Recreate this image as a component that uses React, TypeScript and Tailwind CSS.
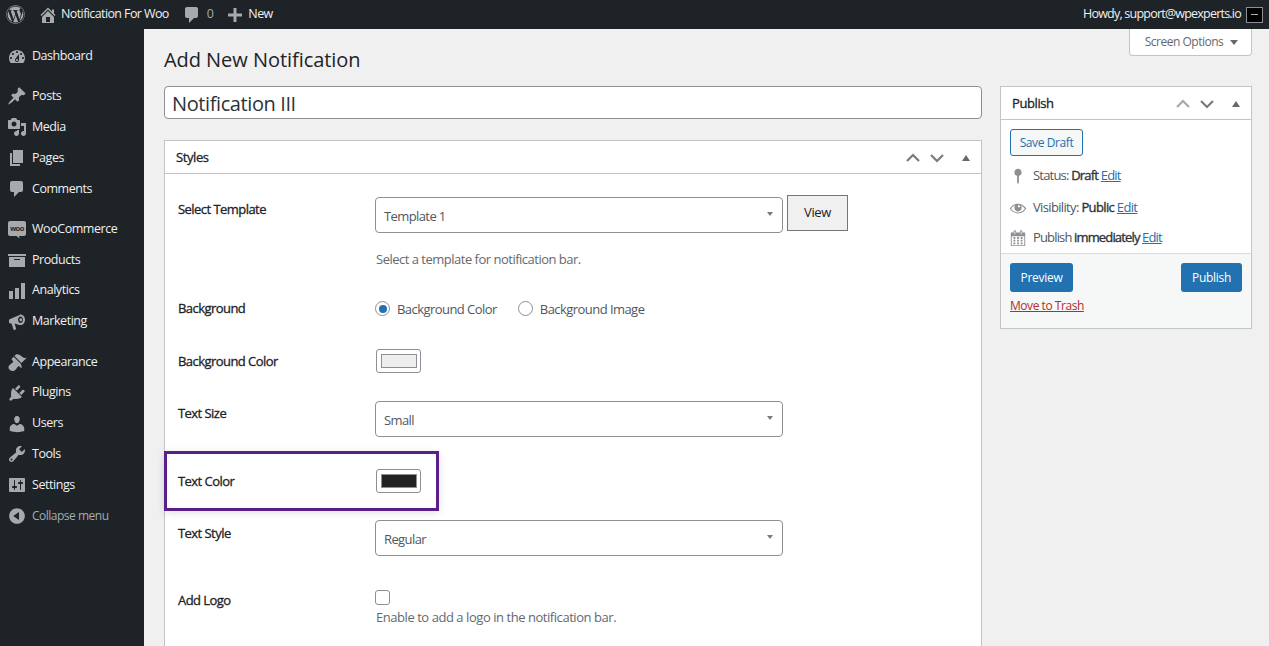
import React from 'react'
import { FaWordpress } from 'react-icons/fa'

const paths = {
  home: 'M16 8.5l1.53 1.53-1.06 1.06L10 4.62l-6.47 6.47-1.06-1.06L10 2.5l4 4v-2h2v4zm-6-2.46l6 5.99V18H4v-5.97zM12 17v-5H8v5h4z',
  comment: 'M5 2h9c1.1 0 2 .9 2 2v7c0 1.1-.9 2-2 2h-2l-5 5v-5H5c-1.1 0-2-.9-2-2V4c0-1.1.9-2 2-2z',
  plus: 'M17 8.5v3h-5.5V17h-3v-5.5H3v-3h5.5V3h3v5.5H17z',
  dashboard: 'M3.76 16h12.48c1.1-1.37 1.76-3.11 1.76-5 0-4.42-3.58-8-8-8s-8 3.58-8 8c0 1.89.66 3.63 1.76 5zM10 4c.55 0 1 .45 1 1s-.45 1-1 1-1-.45-1-1 .45-1 1-1zM6 6c.55 0 1 .45 1 1s-.45 1-1 1-1-.45-1-1 .45-1 1-1zm8 0c.55 0 1 .45 1 1s-.45 1-1 1-1-.45-1-1 .45-1 1-1zm-5.37 5.55L12 7v6c0 1.1-.9 2-2 2s-2-.9-2-2c0-.57.24-1.08.63-1.45zM4 10c.55 0 1 .45 1 1s-.45 1-1 1-1-.45-1-1 .45-1 1-1zm12 0c.55 0 1 .45 1 1s-.45 1-1 1-1-.45-1-1 .45-1 1-1zm-5 3c0-.55-.45-1-1-1s-1 .45-1 1 .45 1 1 1 1-.45 1-1z',
  pin: 'M10.44 3.02l1.82-1.82 6.36 6.35-1.83 1.82c-1.05-.68-2.48-.57-3.41.36l-.75.75c-.92.93-1.04 2.35-.35 3.41l-1.83 1.82-2.41-2.41-2.8 2.79c-.42.42-3.38 2.71-3.8 2.29s1.86-3.39 2.28-3.81l2.79-2.79L4.1 9.36l1.83-1.82c1.05.69 2.48.57 3.4-.36l.75-.75c.93-.92 1.05-2.35.36-3.41z',
  media: 'M13 11V4c0-.55-.45-1-1-1h-1.67L9 1H5L3.67 3H2c-.55 0-1 .45-1 1v7c0 .55.45 1 1 1h10c.55 0 1-.45 1-1zM7 4.5c1.38 0 2.5 1.12 2.5 2.5S8.38 9.5 7 9.5 4.5 8.38 4.5 7 5.62 4.5 7 4.5zM14 6h5v10.5c0 1.38-1.12 2.5-2.5 2.5S14 17.88 14 16.5s1.12-2.5 2.5-2.5c.17 0 .34.02.5.05V9h-3V6zm-4 8.05V13h2v3.5c0 1.38-1.12 2.5-2.5 2.5S7 17.88 7 16.5 8.12 14 9.5 14c.17 0 .34.02.5.05z',
  pages: 'M6 15V2h10v13H6zm-1 1h8v2H3V5h2v11z',
  products: 'M19 4v2H1V4h18zM2 7h16v10H2V7zm11 3V9H7v1h6z',
  analytics: 'M18 18V2h-4v16h4zm-6 0V7H8v11h4zm-6 0v-8H2v8h4z',
  marketing: 'M13.5 2.5c2.5 0 4.5 2.4 4.5 5.3s-2 5.3-4.5 5.3c-.4 0-.8-.1-1.2-.2L7.6 11.6l1.5 5.2c.1.4-.1.7-.5.8l-1.4.4c-.4.1-.7-.1-.8-.4l-1.7-5.9-2-.4c-.4-.1-.7-.4-.7-.8V8.2c0-.4.3-.7.6-.9l9.9-4.4c.4-.2.7-.4 1-.4zm0 2c-1.4 0-2.5 1.5-2.5 3.3s1.1 3.3 2.5 3.3S16 9.6 16 7.8s-1.100-3.300-2.500-3.300zm.3 1.800c.8 0 1.400.7 1.400 1.500s-.6 1.500-1.400 1.500-1.400-.7-1.400-1.500.6-1.500 1.400-1.500z',
  appearance: 'M14.48 11.06L7.41 3.99l1.5-1.5c.5-.56 2.3-.47 3.51.32 1.21.8 1.43 1.28 2.91 2.1 1.18.64 2.45 1.26 4.45.85zm-.71.71L6.7 4.7 4.93 6.47c-.39.39-.39 1.02 0 1.41l1.06 1.06c.39.39.39 1.03 0 1.42-.6.6-1.43 1.11-2.21 1.69-.35.26-.7.53-1.01.84C1.43 13.23.91 15.95 2.7 17.74c1.79 1.79 4.48 1.27 5.84-.08.31-.31.58-.66.85-1.01.58-.78 1.09-1.61 1.69-2.21.39-.39 1.02-.39 1.41 0l1.06 1.06c.39.39 1.02.39 1.41 0z',
  plugins: 'M13.11 4.36L9.87 7.6 8 5.73l3.24-3.24c.35-.34 1.05-.2 1.56.32.52.51.66 1.21.31 1.55zm-8 1.77l.91-1.12 9.01 9.01-1.19.84c-.71.71-2.63 1.16-3.82 1.16H6.14L4.9 17.26c-.59.59-1.54.59-2.12 0-.59-.58-.59-1.53 0-2.12l1.24-1.24v-3.88c0-1.13.4-3.19 1.09-3.89zm7.26 3.97l3.24-3.24c.34-.35 1.04-.21 1.55.31.52.51.66 1.21.31 1.55l-3.24 3.25z',
  users: 'M10 9.25c-2.27 0-2.73-3.44-2.73-3.44C7 4.02 7.82 2 9.97 2c2.16 0 2.98 2.02 2.71 3.81 0 0-.41 3.44-2.68 3.44zm0 2.57L12.72 10c2.39 0 4.52 2.33 4.52 4.53v2.49s-3.65 1.13-7.24 1.13c-3.65 0-7.24-1.13-7.24-1.13v-2.49c0-2.25 1.94-4.48 4.47-4.48z',
  tools: 'M16.68 9.77c-1.34 1.34-3.3 1.67-4.95.99l-5.41 6.52c-.99.99-2.59.99-3.58 0s-.99-2.59 0-3.57l6.52-5.42c-.68-1.65-.35-3.61.99-4.95 1.28-1.28 3.12-1.62 4.72-1.06l-2.89 2.89 2.82 2.82 2.86-2.87c.53 1.58.18 3.39-1.08 4.65zM3.81 16.21c.4.39 1.04.39 1.43 0 .4-.4.4-1.04 0-1.43-.39-.4-1.03-.4-1.43 0-.39.39-.39 1.03 0 1.43z',
  settings: 'M18 16V4c0-.55-.45-1-1-1H3c-.55 0-1 .45-1 1v12c0 .55.45 1 1 1h14c.55 0 1-.45 1-1zM8 11h1c.55 0 1 .45 1 1s-.45 1-1 1H8v1.500c0 .28-.22.5-.5.5s-.5-.22-.5-.5V13H6c-.55 0-1-.45-1-1s.45-1 1-1h1V5.500c0-.28.22-.5.5-.5s.5.22.5.5V11zm5-2h-1c-.55 0-1-.45-1-1s.45-1 1-1h1V5.500c0-.28.22-.5.5-.5s.5.22.5.5V7h1c.55 0 1 .45 1 1s-.45 1-1 1h-1v5.500c0 .28-.22.5-.5.5s-.5-.22-.5-.5V9z',
  collapse: 'M10 2.16c4.33 0 7.84 3.51 7.84 7.84s-3.51 7.84-7.84 7.84S2.16 14.33 2.16 10 5.71 2.16 10 2.16zm2 11.72V6.12L6.18 9.97z',
  status: 'M14 6c0 1.86-1.28 3.41-3 3.86V17c0 .5-.5 1-1 2-.5-1-1-1.500-1-2V9.860C7.280 9.410 6 7.860 6 6c0-2.210 1.790-4 4-4s4 1.790 4 4z',
  eye: 'M18.3 9.5C15 4.9 8.500 3.800 3.900 7.200c-1.200.9-2.200 2.100-3 3.400.2.4.5.8.8 1.200 3.300 4.600 9.600 5.600 14.200 2.400.9-.7 1.700-1.400 2.400-2.400.3-.4.5-.8.8-1.200-.3-.4-.5-.8-.8-1.100zm-8.200-2.300c.5-.5 1.300-.5 1.800 0s.5 1.300 0 1.800-1.300.5-1.800 0-.5-1.300 0-1.800zm-.1 7.700c-3.100 0-6-1.600-7.700-4.200C3.500 9 5.100 7.800 7 7c-.7.8-1 1.700-1 2.700 0 2.200 1.700 4.100 4 4.100 2.200 0 4.100-1.700 4.100-4 0-1-.4-2-1.100-2.700 1.900.8 3.500 2 4.600 3.700-1.700 2.600-4.600 4.100-7.600 4.100z',
  calendar: 'M15 4h3v15H2V4h3V3c0-.41.15-.76.44-1.060.29-.29.65-.44 1.060-.44s.77.15 1.060.44c.29.3.44.65.44 1.060v1h4V3c0-.41.15-.76.44-1.060.29-.29.65-.44 1.060-.44s.77.15 1.060.44c.29.3.44.65.44 1.060v1zM6 3v2.500c0 .14.05.26.15.36.09.09.21.14.35.14s.26-.05.35-.14c.1-.1.15-.22.15-.36V3c0-.14-.05-.26-.15-.35-.09-.1-.21-.15-.35-.15s-.26.05-.35.15c-.1.09-.15.21-.15.35zm7 0v2.500c0 .14.05.26.14.36.1.09.22.14.36.14s.26-.05.36-.14c.09-.1.14-.22.14-.36V3c0-.14-.05-.26-.14-.35-.1-.1-.22-.15-.36-.15s-.26.05-.36.15c-.09.09-.14.21-.14.35zm4 15V8H3v10h14zM7 9v2H5V9h2zm2 0h2v2H9V9zm4 2V9h2v2h-2zm-6 1v2H5v-2h2zm2 0h2v2H9v-2zm4 2v-2h2v2h-2zm-6 1v2H5v-2h2zm4 2H9v-2h2v2zm4 0h-2v-2h2v2z',
}

const Icon = ({ d, className }: { d: string; className?: string }) => (
  <svg viewBox="0 0 20 20" fill="currentColor" fillRule="evenodd" className={className}>
    <path d={d} />
  </svg>
)

const WooIcon = () => (
  <svg viewBox="0 0 20 20" className="w-[20px] h-[20px] text-[#a7aaad]">
    <path fill="currentColor" d="M3 2h14c1.100 0 2 .9 2 2v11c0 1.100-.9 2-2 2h-5l.5 2.500-3-2.500H3c-1.100 0-2-.9-2-2V4c0-1.100.9-2 2-2z" />
    <text x="10" y="12" textAnchor="middle" fontSize="7.500" fontWeight="700" fill="#1d2327" fontFamily="Liberation Sans, sans-serif">woo</text>
  </svg>
)

const menuGroups = [
  { gap: 'mb-[9px] -mt-[1px]', items: [{ label: 'Dashboard', d: paths.dashboard }] },
  {
    gap: 'mb-[9.6px]',
    items: [
      { label: 'Posts', d: paths.pin },
      { label: 'Media', d: paths.media },
      { label: 'Pages', d: paths.pages },
      { label: 'Comments', d: paths.comment },
    ],
  },
  {
    gap: 'mb-[9.6px]',
    items: [
      { label: 'WooCommerce', d: '' },
      { label: 'Products', d: paths.products },
      { label: 'Analytics', d: paths.analytics },
      { label: 'Marketing', d: paths.marketing },
    ],
  },
  {
    gap: 'mb-[9px]',
    items: [
      { label: 'Appearance', d: paths.appearance },
      { label: 'Plugins', d: paths.plugins },
      { label: 'Users', d: paths.users },
      { label: 'Tools', d: paths.tools },
      { label: 'Settings', d: paths.settings },
    ],
  },
]

const TopBar = () => (
  <div className="h-[29px] bg-[#1d2327] flex items-center text-[12.5px] text-[#f0f0f1] tracking-[-0.6px]">
    <FaWordpress className="ml-[6px] w-[19px] h-[19px] text-[#a7aaad]" />
    <Icon d={paths.home} className="ml-[13px] w-[20px] h-[20px] text-[#a7aaad]" />
    <span className="ml-[3px]">Notification For Woo</span>
    <Icon d={paths.comment} className="ml-[13px] w-[20px] h-[20px] text-[#a7aaad]" />
    <span className="ml-[5px] text-[#a7aaad]">0</span>
    <Icon d={paths.plus} className="ml-[12px] w-[20px] h-[20px] text-[#a7aaad]" />
    <span className="ml-[3px]">New</span>
    <span className="ml-auto tracking-[-0.78px]">Howdy, support@wpexperts.io</span>
    <div className="ml-[5px] mr-[6px] w-[17px] h-[16px] border border-[#8c8f94] bg-black flex items-center justify-center">
      <div className="w-[7px] h-[1px] bg-[#b0b0b0]" />
    </div>
  </div>
)

const Sidebar = () => (
  <nav className="w-[144px] shrink-0 bg-[#1d2327] pt-[13.3px] text-[12.5px] text-[#f0f0f1] tracking-[-0.45px]">
    {menuGroups.map(group => (
      <div key={group.items[0].label} className={group.gap}>
        {group.items.map(item => (
          <div key={item.label} className="h-[30.8px] flex items-center pl-[7px]">
            {item.d ? <Icon d={item.d} className="w-[20px] h-[20px] text-[#a7aaad]" /> : <WooIcon />}
            <span className="ml-[5px]">{item.label}</span>
          </div>
        ))}
      </div>
    ))}
    <div className="h-[30px] -mt-[9px] flex items-center pl-[7px] text-[12px] text-[#a7aaad] tracking-[-0.5px]">
      <Icon d={paths.collapse} className="w-[20px] h-[20px]" />
      <span className="ml-[5px]">Collapse menu</span>
    </div>
  </nav>
)

const Arrows = ({ dimUp }: { dimUp?: boolean }) => (
  <div className="flex items-center text-[#787c82]">
    <svg viewBox="0 0 20 20" className={`w-[20px] h-[20px] ${dimUp ? 'text-[#a7aaad]' : ''}`} fill="none" stroke="currentColor" strokeWidth="2.200">
      <path d="M4 13l6-6 6 6" />
    </svg>
    <svg viewBox="0 0 20 20" className="ml-[4px] w-[20px] h-[20px]" fill="none" stroke="currentColor" strokeWidth="2.200">
      <path d="M4 7l6 6 6-6" />
    </svg>
    <div className="ml-[15px] w-0 h-0 border-x-[4px] border-x-transparent border-b-[6px] border-b-[#646970]" />
  </div>
)

const SelectBox = ({ value }: { value: string }) => (
  <div className="w-[408px] h-[36px] bg-white border border-[#8c8f94] rounded-[4px] flex items-center justify-between pl-[8px] pr-[9px] text-[#50575e] tracking-[-0.6px]">
    <span className="mt-[4px]">{value}</span>
    <div className="mb-[3px] w-0 h-0 border-x-[3px] border-x-transparent border-t-[4px] border-t-[#787c82]" />
  </div>
)

const Swatch = ({ color }: { color: string }) => (
  <div className="ml-[1px] w-[45px] h-[24px] bg-white border border-[#8c8f94] rounded-[3px] flex items-center justify-center">
    <div className={`w-[36px] h-[14px] border border-[#8c8f94] ${color}`} />
  </div>
)

const Row = ({ label, rowClass, labelClass, children }: { label: string; rowClass: string; labelClass: string; children: React.ReactNode }) => (
  <div className={`grid grid-cols-[197px_1fr] ${rowClass}`}>
    <div className={`text-[#1d2327] tracking-[-0.55px] [-webkit-text-stroke:0.3px_#1d2327] ${labelClass}`}>{label}</div>
    <div>{children}</div>
  </div>
)

const Radio = ({ checked, label }: { checked?: boolean; label: string }) => (
  <div className="flex items-center text-[#50575e] tracking-[-0.55px]">
    <div className="w-[15px] h-[15px] rounded-full border border-[#8c8f94] bg-white flex items-center justify-center">
      {checked && <div className="w-[8px] h-[8px] rounded-full bg-[#2271b1]" />}
    </div>
    <span className="ml-[7px] mt-[2px]">{label}</span>
  </div>
)

const StylesCard = () => (
  <div className="relative mt-[21px] h-[520px] bg-white border border-[#c3c4c7] text-[13px] tracking-[-0.4px]">
    <div className="h-[33px] pt-[2px] border-b border-[#c3c4c7] flex items-center justify-between px-[11px]">
      <span className="text-[#1d2327] [-webkit-text-stroke:0.3px_#1d2327]">Styles</span>
      <Arrows />
    </div>
    <div className="pt-[21px] pl-[13px]">
      <Row label="Select Template" rowClass="h-[103px]" labelClass="pt-[5px]">
        <div className="flex items-start">
          <div className="mt-[2px]"><SelectBox value="Template 1" /></div>
          <div className="ml-[4px] w-[61px] h-[36px] bg-[#f0f0f0] border border-[#767676] flex items-center justify-center text-[#1d2327]">View</div>
        </div>
        <p className="mt-[17px] ml-[1px] text-[#646970] tracking-[-0.5px]">Select a template for notification bar.</p>
      </Row>
      <Row label="Background" rowClass="h-[50px]" labelClass="pt-[1px]">
        <div className="flex items-center gap-[21px]">
          <Radio checked label="Background Color" />
          <Radio label="Background Image" />
        </div>
      </Row>
      <Row label="Background Color" rowClass="h-[52px]" labelClass="pt-[4px]">
        <div className="pt-[1px]"><Swatch color="bg-[#eeeeee]" /></div>
      </Row>
      <Row label="Text Size" rowClass="h-[68px]" labelClass="pt-[4px]">
        <div className="pt-[1px]"><SelectBox value="Small" /></div>
      </Row>
      <Row label="Text Color" rowClass="h-[51px]" labelClass="pt-[4px]">
        <div className="pt-[1px]"><Swatch color="bg-[#222222]" /></div>
      </Row>
      <Row label="Text Style" rowClass="h-[70px]" labelClass="pt-[5px]">
        <div className="pt-[1px]"><SelectBox value="Regular" /></div>
      </Row>
      <Row label="Add Logo" rowClass="h-[60px]" labelClass="pt-[2px]">
        <div className="pt-[1px] w-[15px] h-[16px] box-content">
          <div className="w-[15px] h-[15px] bg-white border border-[#8c8f94] rounded-[3px]" />
        </div>
        <p className="mt-[2px] ml-[1px] text-[#646970] tracking-[-0.45px]">Enable to add a logo in the notification bar.</p>
      </Row>
    </div>
    <div className="absolute left-[-1px] top-[310px] w-[275px] h-[60px] border-[3px] border-[#5b1f8a] shadow-[0_2px_8px_rgba(0,0,0,0.12)]" />
  </div>
)

const Strong = ({ children }: { children: React.ReactNode }) => (
  <b className="font-normal text-[#2c3338] [-webkit-text-stroke:0.35px_#2c3338]">{children}</b>
)

const PublishCard = () => (
  <aside className="w-[252px] h-[243px] bg-white border border-[#c3c4c7] text-[13px] tracking-[-0.65px] text-[#50575e]">
    <div className="h-[33px] pt-[2px] border-b border-[#c3c4c7] flex items-center justify-between px-[11px]">
      <span className="text-[#1d2327] tracking-[-0.4px] [-webkit-text-stroke:0.3px_#1d2327]">Publish</span>
      <Arrows dimUp />
    </div>
    <div className="h-[133px] pl-[9px]">
      <div className="pt-[9px]">
        <div className="w-[73px] h-[27px] bg-[#f6f7f7] border border-[#2271b1] rounded-[3px] flex items-center justify-center text-[12px] text-[#2271b1] tracking-[-0.4px]">Save Draft</div>
      </div>
      <div className="mt-[10px] h-[20px] flex items-center">
        <Icon d={paths.status} className="-ml-[1px] w-[18px] h-[18px] text-[#8c8f94]" />
        <span className="ml-[6px] tracking-[-0.8px]">Status: <Strong>Draft</Strong> <a className="text-[#2271b1] underline">Edit</a></span>
      </div>
      <div className="mt-[12px] h-[20px] flex items-center">
        <Icon d={paths.eye} className="-ml-[1px] w-[18px] h-[18px] text-[#8c8f94]" />
        <span className="ml-[6px]">Visibility: <Strong>Public</Strong> <a className="text-[#2271b1] underline">Edit</a></span>
      </div>
      <div className="mt-[10px] h-[20px] flex items-center">
        <Icon d={paths.calendar} className="-ml-[1px] w-[18px] h-[18px] text-[#8c8f94]" />
        <span className="ml-[6px] tracking-[-0.85px]">Publish <Strong>immediately</Strong> <a className="text-[#2271b1] underline">Edit</a></span>
      </div>
    </div>
    <div className="h-[75px] bg-[#f6f7f7] border-t border-[#dcdcde] px-[9px] pt-[9px]">
      <div className="flex justify-between text-[12px] tracking-[-0.3px]">
        <div className="w-[63px] h-[29px] bg-[#2271b1] rounded-[3px] flex items-center justify-center text-white">Preview</div>
        <div className="w-[61px] h-[29px] bg-[#2271b1] rounded-[3px] flex items-center justify-center text-white">Publish</div>
      </div>
      <a className="block mt-[5px] text-[12px] text-[#b32d2e] underline tracking-[-0.45px]">Move to Trash</a>
    </div>
  </aside>
)

export default function App() {
  return (
    <div className="w-[1269px] h-[646px] overflow-hidden bg-[#f0f0f1] font-['Open_Sans',sans-serif]">
      <TopBar />
      <div className="flex h-[617px]">
        <Sidebar />
        <main className="flex-1 pl-[20px] pr-[17px]">
          <div className="h-[57px] flex justify-between items-start">
            <h1 className="pt-[17px] text-[20px] leading-[28px] text-[#1d2327] tracking-[-0.05px]">Add New Notification</h1>
            <div className="w-[123px] h-[27px] pl-[2px] bg-white border border-t-0 border-[#c3c4c7] rounded-b-[4px] flex items-center justify-center text-[12px] text-[#646970] tracking-[-0.5px]">
              Screen Options
              <div className="ml-[7px] w-0 h-0 border-x-[4px] border-x-transparent border-t-[5px] border-t-[#646970]" />
            </div>
          </div>
          <div className="flex gap-[18px]">
            <div className="w-[818px]">
              <div className="h-[33px] pt-[2px] bg-white border border-[#8c8f94] rounded-[4px] flex items-center pl-[7px] text-[20px] text-[#2c3338] tracking-[-0.4px]">Notification III</div>
              <StylesCard />
            </div>
            <PublishCard />
          </div>
        </main>
      </div>
    </div>
  )
}
